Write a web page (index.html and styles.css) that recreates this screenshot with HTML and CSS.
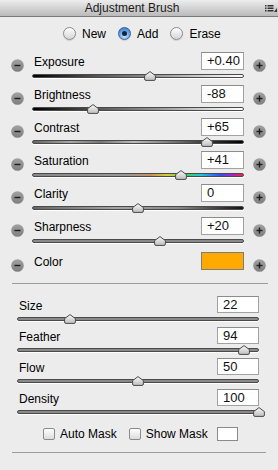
FILE: index.html
```html
<!DOCTYPE html>
<html lang="en">
<head>
  <meta charset="UTF-8">
  <title>Adjustment Brush</title>
  <link rel="stylesheet" href="styles.css">
</head>
<body>

<svg class="defs" width="0" height="0">
  <defs>
    <linearGradient id="thumbFill" x1="0" y1="0" x2="0" y2="1">
      <stop offset="0" stop-color="#fafafa"/>
      <stop offset="1" stop-color="#bdbdbd"/>
    </linearGradient>
    <linearGradient id="stepFill" x1="0" y1="0" x2="0" y2="1">
      <stop offset="0" stop-color="#a2a2a2"/>
      <stop offset="1" stop-color="#7e7e7e"/>
    </linearGradient>
  </defs>
</svg>

<div class="panel">
  <div class="titlebar">
    <span class="title">Adjustment Brush</span>
    <svg class="menu" width="12" height="7" viewBox="0 0 12 7">
      <rect x="0" y="0" width="1.5" height="1.5" fill="#333"/>
      <rect x="2.5" y="0" width="6" height="1.5" fill="#333"/>
      <rect x="0" y="2.5" width="1.5" height="1.5" fill="#333"/>
      <rect x="2.5" y="2.5" width="6" height="1.5" fill="#333"/>
      <rect x="0" y="5" width="1.5" height="1.5" fill="#333"/>
      <rect x="2.5" y="5" width="6" height="1.5" fill="#333"/>
      <path d="M12 3 L12 7 L9 7 Z" fill="#333"/>
    </svg>
  </div>

  <div class="modes">
    <label class="mode"><span class="radio"></span>New</label>
    <label class="mode"><span class="radio on"></span>Add</label>
    <label class="mode"><span class="radio"></span>Erase</label>
  </div>

  <div class="adjustments" id="adjustments">
    <!-- rows are built below -->
  </div>

  <div class="rule"></div>

  <div class="brush" id="brush"></div>

  <div class="masks">
    <label class="mask"><span class="check"></span>Auto Mask</label>
    <label class="mask"><span class="check"></span>Show Mask</label>
    <span class="mask-swatch"></span>
  </div>

  <div class="rule bottom"></div>
</div>

<script>
  const adjustments = [
    { name: "Exposure", value: "+0.40", pos: 55.7, track: "exposure" },
    { name: "Brightness", value: "-88", pos: 28.8, track: "exposure" },
    { name: "Contrast", value: "+65", pos: 82.5, track: "contrast" },
    { name: "Saturation", value: "+41", pos: 70.5, track: "saturation" },
    { name: "Clarity", value: "0", pos: 50.2, track: "clarity" },
    { name: "Sharpness", value: "+20", pos: 60.6, track: "plain" }
  ];

  const brush = [
    { name: "Size", value: 22 },
    { name: "Feather", value: 94 },
    { name: "Flow", value: 50 },
    { name: "Density", value: 100 }
  ];

  const thumb = pos => `
    <svg class="thumb" style="left:${pos}%" width="12" height="10" viewBox="0 0 12 10">
      <path d="M6 0.6 L11.4 4.6 L11.4 8 Q11.4 9.4 10 9.4 L2 9.4 Q0.6 9.4 0.6 8 L0.6 4.6 Z"
            fill="url(#thumbFill)" stroke="#4a4a4a" stroke-width="1"/>
    </svg>`;

  const step = sign => `
    <span class="step ${sign}">
      <svg width="13" height="13" viewBox="0 0 13 13">
        <circle cx="6.5" cy="6.5" r="6.3" fill="url(#stepFill)"/>
        <rect x="3.5" y="5.8" width="6" height="1.4" fill="#1c1c1c"/>
        ${sign === "plus" ? '<rect x="5.8" y="3.5" width="1.4" height="6" fill="#1c1c1c"/>' : ''}
      </svg>
    </span>`;

  function buildAdjustments() {
    const box = document.getElementById('adjustments');
    adjustments.forEach(item => {
      const row = document.createElement('div');
      row.className = 'adj';
      row.innerHTML = `
        ${step('minus')}
        <div class="adj-body">
          <div class="head"><span class="name">${item.name}</span><span class="field">${item.value}</span></div>
          <div class="slider"><div class="track ${item.track}"></div>${thumb(item.pos)}</div>
        </div>
        ${step('plus')}
      `;
      box.appendChild(row);
    });

    const color = document.createElement('div');
    color.className = 'adj color';
    color.innerHTML = `
      ${step('minus')}
      <div class="adj-body">
        <div class="head"><span class="name">Color</span><span class="swatch"></span></div>
      </div>
      ${step('plus')}
    `;
    box.appendChild(color);
  }

  function buildBrush() {
    const box = document.getElementById('brush');
    brush.forEach(item => {
      const row = document.createElement('div');
      row.className = 'brush-row';
      row.innerHTML = `
        <div class="head"><span class="name">${item.name}</span><span class="field">${item.value}</span></div>
        <div class="slider"><div class="track plain"></div>${thumb(item.value)}</div>
      `;
      box.appendChild(row);
    });
  }

  buildAdjustments();
  buildBrush();
</script>

</body>
</html>
```

FILE: styles.css
```css
body {
  margin: 0;
  background: #ececec;
  font-family: 'Liberation Sans', Arial, sans-serif;
  font-size: 12px;
  color: #000;
}

.defs {
  display: block;
  height: 0;
}

.panel {
  width: 278px;
}

.titlebar {
  position: relative;
  height: 16px;
  padding-right: 14px;
  border-bottom: 1px solid #7a7a7a;
  background: linear-gradient(#ededed, #bababa);
  display: flex;
  align-items: center;
  justify-content: center;
}

.title {
  color: #1a1a1a;
  line-height: 16px;
}

.menu {
  position: absolute;
  right: 1px;
  top: 5px;
}

.modes {
  display: flex;
  align-items: center;
  gap: 12px;
  height: 13px;
  padding: 10px 0 12px 63px;
}

.mode {
  display: flex;
  align-items: center;
  gap: 6px;
}

.radio {
  width: 13px;
  height: 13px;
  box-sizing: border-box;
  border-radius: 50%;
  border: 1px solid #8b8b8b;
  background: linear-gradient(#fdfdfd, #d6d6d6);
  box-shadow: 0 1px 1px rgba(0,0,0,0.12);
}

.radio.on {
  border-color: #3d5f92;
  background: radial-gradient(circle at 50% 75%, #c4e3ff, #5c9de2 60%, #2e6bbf);
  display: flex;
  align-items: center;
  justify-content: center;
}

.radio.on::after {
  content: '';
  width: 5px;
  height: 5px;
  border-radius: 50%;
  background: #13233a;
}

.adj {
  display: grid;
  grid-template-columns: 32px 212px 1fr;
  height: 33px;
}

.adj.color {
  height: 18px;
  margin-top: 2px;
}

.step {
  margin-top: 7px;
}

.step svg {
  display: block;
}

.step.minus {
  margin-left: 11px;
}

.step.plus {
  margin-left: 9px;
}

.head {
  display: flex;
  justify-content: space-between;
  align-items: center;
  height: 18px;
}

.name {
  padding: 2px 0 0 2px;
}

.field {
  width: 43px;
  height: 18px;
  box-sizing: border-box;
  border: 1px solid #a2a2a2;
  border-top-color: #8c8c8c;
  background: #fff;
  font-size: 13px;
  line-height: 16px;
  padding-left: 5px;
  color: #111;
}

.swatch {
  width: 43px;
  height: 18px;
  box-sizing: border-box;
  border: 1px solid #7d7d7d;
  background: #ffaa00;
}

.slider {
  position: relative;
  padding-top: 4px;
}

.track {
  height: 4px;
  box-sizing: border-box;
  border: 1px solid #4a4a4a;
  border-radius: 2px;
  box-shadow: 0 1px 0 #fff;
  background: #8a8a8a;
}

.track.exposure {
  background: linear-gradient(to right, #000, #555 30%, #999 60%, #ddd 85%, #fff);
}

.track.contrast {
  background: linear-gradient(to right, #666, #a8a8a8 18%, #777 32%, #bcbcbc 48%, #8a8a8a 62%, #3a3a3a 82%, #000);
}

.track.saturation {
  background: linear-gradient(to right, #888, #999 45%, #c89060 56%, #d8d030 64%, #40d040 72%, #20c8e0 80%, #3050ff 89%, #b020d0 95%, #ff2040);
}

.track.clarity {
  background: linear-gradient(to right, #666, #a5a5a5 40%, #888 70%, #111);
}

.thumb {
  position: absolute;
  top: 1px;
  margin-left: -6px;
}

.rule {
  height: 1px;
  background: #9c9c9c;
  margin: 13px 10px 0 12px;
}

.brush {
  padding: 12px 19px 0 17px;
}

.brush-row {
  height: 31px;
}

.brush .head {
  height: 17px;
}

.brush .field {
  width: 42px;
  height: 17px;
  line-height: 15px;
}

.masks {
  display: flex;
  align-items: center;
  height: 14px;
  margin-top: 7px;
  padding-left: 43px;
}

.mask {
  display: flex;
  align-items: center;
  gap: 5px;
  margin-right: 12px;
}

.check {
  width: 12px;
  height: 12px;
  box-sizing: border-box;
  border: 1px solid #8a8a8a;
  border-radius: 2px;
  background: linear-gradient(#fff, #dcdcdc);
}

.mask-swatch {
  width: 21px;
  height: 14px;
  box-sizing: border-box;
  border: 1px solid #8a8a8a;
  background: #fff;
  margin-left: -3px;
}

.rule.bottom {
  margin: 11px 12px 0 12px;
}
```
